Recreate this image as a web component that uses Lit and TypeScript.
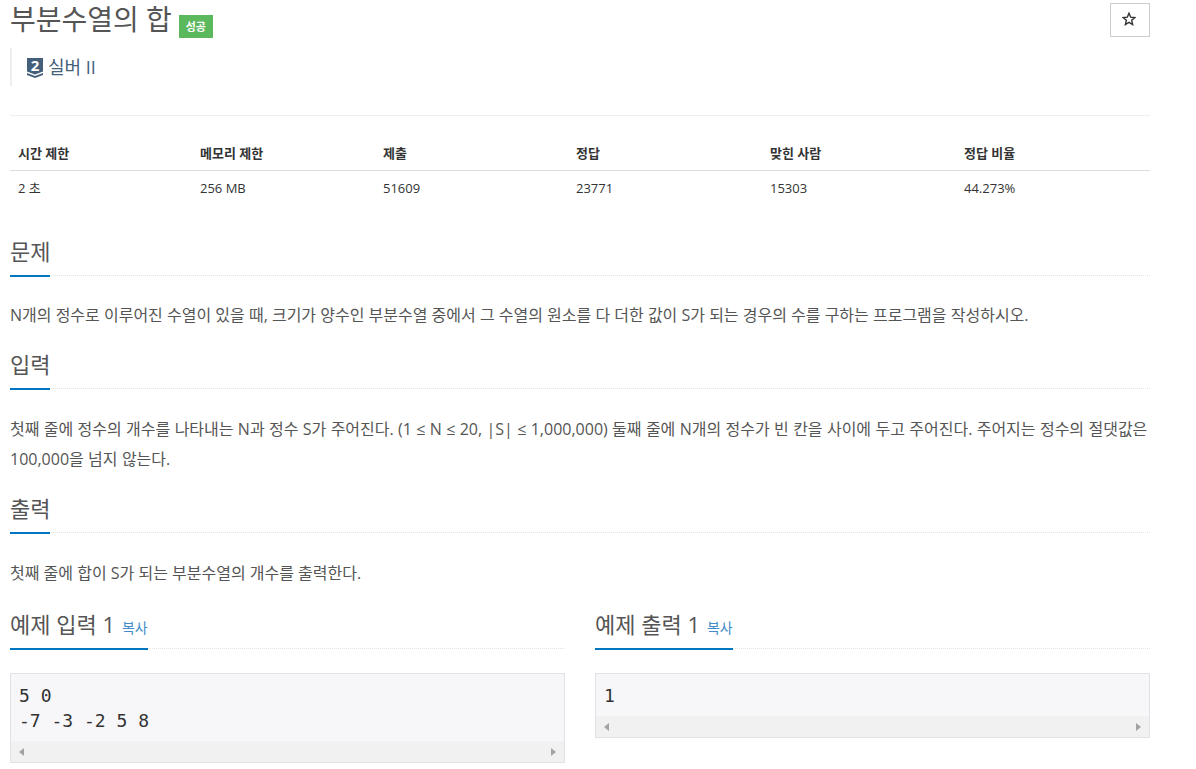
import { LitElement, html, css } from "lit";
import { customElement } from "lit/decorators.js";

@customElement("app-root")
export class AppRoot extends LitElement {
  static styles = css`
    :host { display: block; height: 769px; overflow: hidden; background: #fff; color: #333;
      font-family: "Open Sans", "Noto Sans CJK KR", sans-serif; font-size: 14px; line-height: 1.42857; }
    .page { width: 1140px; margin-left: 10px; }
    .head { display: flex; justify-content: space-between; height: 37px; }
    h1 { margin: 0; font-size: 28px; font-weight: 400; color: #555; display: flex; align-items: flex-start; gap: 7px; height: 39px; line-height: 39px; white-space: nowrap; }
    .badge { background: #5cb85c; color: #fff; font-size: 11px; font-weight: 700; height: 23px; width: 34px; display: flex; align-items: center; justify-content: center; margin-top: 15px; line-height: 1; }
    .star { border: 1px solid #ccc; display: flex; align-items: center; justify-content: center; margin-top: 3px; padding: 0 2px 2px 0; box-sizing: border-box; width: 40px; height: 34px; }
    .tier { margin-top: 11px; border-left: 2px solid #eee; height: 36px; padding: 2px 0 0 15px; display: flex; align-items: center; gap: 5px; font-size: 18px; color: #435f7a; }
    .icon { position: relative; width: 16px; height: 20px; }
    .icon svg { display: block; }
    .icon span { position: absolute; left: 0; right: 0; top: 0; text-align: center; color: #fff; font-size: 15px; font-weight: 700; line-height: 15px; }
    hr { border: 0; border-top: 1px solid #eee; margin: 29px 0 20px; }
    table { width: 100%; border-collapse: collapse; table-layout: fixed; font-size: 13px; color: #333; margin-bottom: 28px; }
    th { text-align: left; font-weight: 700; padding: 8px; height: 18px; border-bottom: 1px solid #ddd; line-height: 17px; }
    td { padding: 7px 8px 9px; height: 18px; line-height: 20px; }
    .title { height: 40px; border-bottom: 1px dotted #e3e3e3; font-size: 22px; color: #555; display: flex; align-items: flex-end; }
    .title > div { border-bottom: 2px solid #0076c0; height: 42px; line-height: 33px; margin-bottom: -2px; display: inline-flex; align-items: baseline; white-space: pre; box-sizing: border-box; }
    .sp { margin-top: 18px; }
    .copy { font-size: 14px; color: #428bca; margin-left: 7px; }
    p { margin: 25px 0 0; font-size: 16px; line-height: 30px; color: #555; }
    p.first { margin-top: 24px; }
    p.spaced { word-spacing: 0.2px; }
    .samples { display: grid; grid-template-columns: 555px 555px; gap: 30px; margin-top: 20px; }
    pre { margin: 0; font-family: "DejaVu Sans Mono", monospace; font-size: 18px; line-height: 25px; color: #333; padding: 9px 8px 8px; }
    .box { margin-top: 24px; border: 1px solid #e1e1e8; background: #f7f7f9; }
    .sb { height: 21px; background: #f1f1f1; display: flex; justify-content: space-between; align-items: center; padding: 0 8px; }
    .tri-l { width: 0; height: 0; border: 4px solid transparent; border-right: 5px solid #a3a3a3; border-left: 0; }
    .tri-r { width: 0; height: 0; border: 4px solid transparent; border-left: 5px solid #a3a3a3; border-right: 0; }
  `;

  render() {
    const heads: [string, number][] = [["시간 제한", 182], ["메모리 제한", 183], ["제출", 193], ["정답", 194], ["맞힌 사람", 194], ["정답 비율", 194]];
    const vals = ["2 초", "256 MB", "51609", "23771", "15303", "44.273%"];
    return html`<div class="page">
      <div class="head">
        <h1>부분수열의 합 <span class="badge">성공</span></h1>
        <div class="star"><svg width="14" height="14" viewBox="0 0 24 24" fill="none" stroke="#333" stroke-width="2.4" stroke-linejoin="miter"><path d="M12 2l2.900 6.900 7.100.6-5.400 4.800 1.600 7.200-6.200-3.800-6.200 3.800 1.600-7.200L2 9.500l7.100-.6z"/></svg></div>
      </div>
      <div class="tier">
        <div class="icon"><svg width="16" height="20" viewBox="0 0 16 20"><path d="M0 0h16v13.500l-8 3-8-3z" fill="#435f7a"/><path d="M0 15l8 3 8-3v2l-8 3-8-3z" fill="#435f7a"/></svg><span>2</span></div>
        <span>실버 II</span>
      </div>
      <hr />
      <table>
        <colgroup>${heads.map(h => html`<col style="width:${h[1]}px" />`)}</colgroup>
        <tr>${heads.map(h => html`<th>${h[0]}</th>`)}</tr>
        <tr>${vals.map(v => html`<td>${v}</td>`)}</tr>
      </table>
      <div class="title"><div>문제</div></div>
      <p class="first">N개의 정수로 이루어진 수열이 있을 때, 크기가 양수인 부분수열 중에서 그 수열의 원소를 다 더한 값이 S가 되는 경우의 수를 구하는 프로그램을 작성하시오.</p>
      <div class="title sp"><div>입력</div></div>
      <p class="spaced">첫째 줄에 정수의 개수를 나타내는 N과 정수 S가 주어진다. (1 ≤ N ≤ 20, |S| ≤ 1,000,000) 둘째 줄에 N개의 정수가 빈 칸을 사이에 두고 주어진다. 주어지는 정수의 절댓값은 100,000을 넘지 않는다.</p>
      <div class="title sp"><div>출력</div></div>
      <p>첫째 줄에 합이 S가 되는 부분수열의 개수를 출력한다.</p>
      <div class="samples">
        <div>
          <div class="title"><div>예제 입력 <span>1</span><span class="copy">복사</span></div></div>
          <div class="box"><pre>5 0
-7 -3 -2 5 8</pre><div class="sb"><i class="tri-l"></i><i class="tri-r"></i></div></div>
        </div>
        <div>
          <div class="title"><div>예제 출력 <span>1</span><span class="copy">복사</span></div></div>
          <div class="box"><pre>1</pre><div class="sb"><i class="tri-l"></i><i class="tri-r"></i></div></div>
        </div>
      </div>
    </div>`;
  }
}
